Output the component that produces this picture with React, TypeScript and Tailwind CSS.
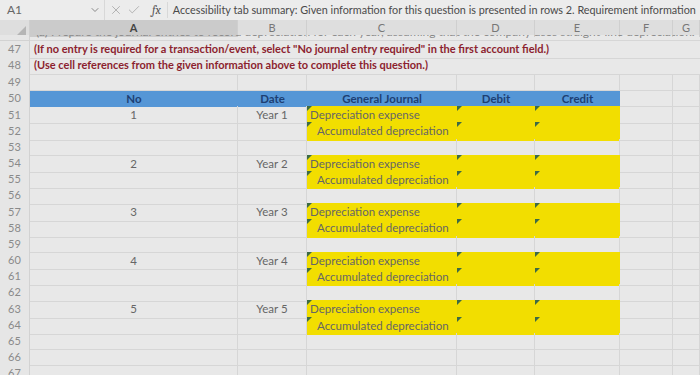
import { ChevronDown, X, Check } from "lucide-react";

const grid = "grid grid-cols-[30px_208px_69px_150px_78px_85px_53px_1fr]";
const font = { fontFamily: "Lato, 'Open Sans', sans-serif" };

const colLetters = ["A", "B", "C", "D", "E", "F", "G"];

type Entry = { no: number; year: string };
const entries: Entry[] = [
  { no: 1, year: "Year 1" },
  { no: 2, year: "Year 2" },
  { no: 3, year: "Year 3" },
  { no: 4, year: "Year 4" },
  { no: 5, year: "Year 5" },
];

function Flag() {
  return (
    <span className="absolute left-0 top-0 h-0 w-0 border-t-[5px] border-r-[5px] border-t-[#3d6b45] border-r-transparent" />
  );
}

function RowNum({ n }: { n: number }) {
  return (
    <div className="flex items-center justify-center border-r border-b border-[#d2d2d2] bg-[#e6e6e6] text-[11px] text-[#8a8a8a]">
      {n}
    </div>
  );
}

function Cell({ children, className = "" }: { children?: React.ReactNode; className?: string }) {
  return (
    <div className={`relative flex items-center whitespace-nowrap border-r border-b border-[#d6d6d6] text-[11.5px] text-[#666] ${className}`}>
      {children}
    </div>
  );
}

function EmptyRow({ n }: { n: number }) {
  return (
    <div className={`${grid} h-[16.2px]`}>
      <RowNum n={n} />
      {colLetters.map((c) => (
        <Cell key={c} />
      ))}
    </div>
  );
}

function EntryRows({ start, entry }: { start: number; entry: Entry }) {
  const yellow = "bg-[#f2de00] border-[#f2de00]";
  return (
    <>
      <div className={`${grid} h-[16.2px]`}>
        <RowNum n={start} />
        <Cell className="justify-center">{entry.no}</Cell>
        <Cell className="justify-center">{entry.year}</Cell>
        <Cell className={`${yellow} pl-[3px] text-[#6b5a1e]`}>
          <Flag />
          Depreciation expense
        </Cell>
        <Cell className={yellow}>
          <Flag />
        </Cell>
        <Cell className={yellow}>
          <Flag />
        </Cell>
        <Cell />
        <Cell />
      </div>
      <div className={`${grid} h-[16.2px]`}>
        <RowNum n={start + 1} />
        <Cell />
        <Cell />
        <Cell className={`${yellow} pl-[10px] text-[#6b5a1e]`}>
          <Flag />
          Accumulated depreciation
        </Cell>
        <Cell className={yellow}>
          <Flag />
        </Cell>
        <Cell className={yellow}>
          <Flag />
        </Cell>
        <Cell />
        <Cell />
      </div>
    </>
  );
}

export default function App() {
  return (
    <div className="h-[375px] w-[700px] overflow-hidden bg-[#e8e8e8]" style={font}>
      {/* Formula bar */}
      <div className="flex h-[20px] items-center bg-[#ececec] text-[10.8px] text-[#4a4a4a]">
        <span className="w-[89px] shrink-0 pl-[7px] text-[12px] text-[#666]">A1</span>
        <ChevronDown className="size-3 shrink-0 text-[#888]" />
        <div className="ml-[3px] flex h-full shrink-0 items-center gap-[4px] border-l border-[#d8d8d8] pl-[4px] text-[#aaa]">
          <X className="size-[14px]" strokeWidth={1.5} />
          <Check className="size-[14px]" strokeWidth={1.5} />
        </div>
        <span className="ml-[11px] shrink-0 font-serif text-[12px] italic text-[#555]">fx</span>
        <span className="ml-[6px] whitespace-nowrap border-l border-[#d8d8d8] pl-[5px]">
          Accessibility tab summary: Given information for this question is presented in rows 2. Requirement information
        </span>
      </div>

      {/* Column headers */}
      <div className={`${grid} h-[15px] bg-[#dedede] text-[11px] text-[#777]`}>
        <div className="relative border-r border-[#cfcfcf]">
          <span className="absolute bottom-[2px] right-[3px] h-0 w-0 border-b-[9px] border-l-[9px] border-b-[#b5b5b5] border-l-transparent" />
        </div>
        {colLetters.map((c) => (
          <div
            key={c}
            className={`flex items-center justify-center border-r border-[#cfcfcf] ${
              c === "A" ? "bg-[#cbcbcb] font-bold text-[#444]" : ""
            }`}
          >
            {c}
          </div>
        ))}
      </div>

      {/* Row 46, clipped */}
      <div className={`${grid} h-[6px]`}>
        <div className="border-r border-b border-[#d2d2d2] bg-[#e6e6e6]" />
        <div className="col-span-7 overflow-hidden border-b border-[#d6d6d6]">
          <div className="-mt-[12px] whitespace-nowrap pl-[6px] text-[12px] text-[#888]">
            (a) Prepare the journal entries to record depreciation for each year, assuming that the company uses straight-line depreciation.
          </div>
        </div>
      </div>

      {/* Rows 47-48 instructions */}
      {[
        { n: 47, t: '(If no entry is required for a transaction/event, select "No journal entry required" in the first account field.)' },
        { n: 48, t: "(Use cell references from the given information above to complete this question.)" },
      ].map((r) => (
        <div key={r.n} className={`${grid} h-[16.4px]`}>
          <RowNum n={r.n} />
          <div className="col-span-7 flex items-center whitespace-nowrap border-b border-[#d6d6d6] pl-[4px] text-[11px] font-bold text-[#8c1f2f]">
            {r.t}
          </div>
        </div>
      ))}

      <EmptyRow n={49} />

      {/* Row 50 header */}
      <div className={`${grid} h-[16.2px]`}>
        <RowNum n={50} />
        <div className="col-span-5 grid grid-cols-[208px_69px_150px_78px_85px] bg-[#5596d6] text-[11.5px] font-bold text-[#1d3f73]">
          <div className="flex items-center justify-center">No</div>
          <div className="flex items-center justify-center">Date</div>
          <div className="flex items-center justify-center">General Journal</div>
          <div className="flex items-center justify-center">Debit</div>
          <div className="flex items-center justify-center">Credit</div>
        </div>
        <Cell />
        <Cell />
      </div>

      {entries.map((e, i) => (
        <div key={e.no}>
          <EntryRows start={51 + i * 3} entry={e} />
          {i < entries.length - 1 && <EmptyRow n={53 + i * 3} />}
        </div>
      ))}

      <EmptyRow n={65} />
      <EmptyRow n={66} />
      <EmptyRow n={67} />
    </div>
  );
}
